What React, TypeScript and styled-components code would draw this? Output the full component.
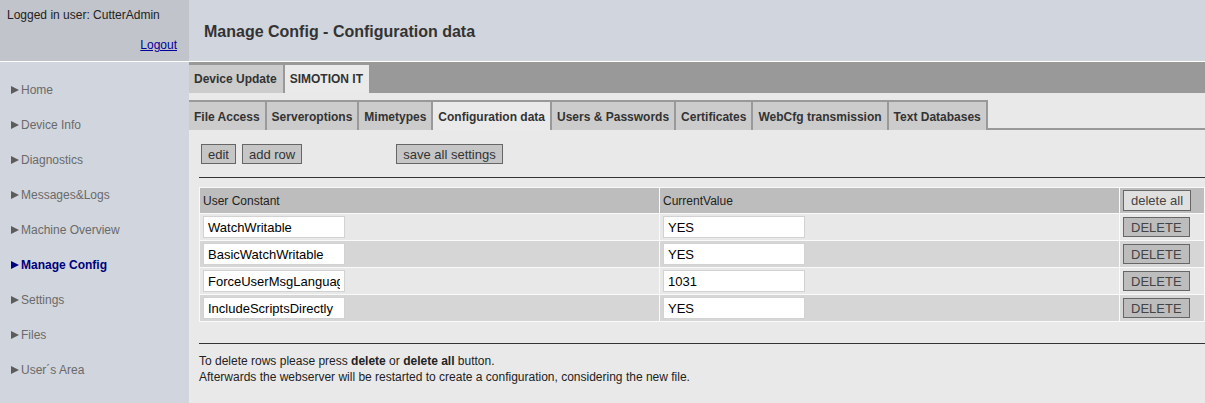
import styled, { createGlobalStyle } from "styled-components";

const GlobalStyle = createGlobalStyle`
  html, body {
    margin: 0;
    padding: 0;
  }
  body {
    font-family: "Liberation Sans", Arial, sans-serif;
    background: #e9e9e9;
  }
`;

const Page = styled.div`
  display: grid;
  grid-template-columns: 189px 1fr;
  min-height: 100vh;
`;

const Sidebar = styled.aside`
  display: flex;
  flex-direction: column;
  background: #d1d5dd;
`;

const UserBox = styled.div`
  display: flex;
  flex-direction: column;
  height: 62px;
  box-sizing: border-box;
  padding: 8px 12px 0 7px;
  background: #c1c4ca;
  border-bottom: 1px solid #fff;
`;

const UserLine = styled.div`
  font-size: 12px;
  line-height: 15px;
  color: #222;
`;

const LogoutLink = styled.a`
  align-self: flex-end;
  margin-top: 15px;
  font-size: 12px;
  line-height: 15px;
  color: #00009c;
  text-decoration: underline;
  cursor: pointer;
`;

const Nav = styled.nav`
  display: flex;
  flex-direction: column;
  padding-top: 10px;
`;

const NavItem = styled.div<{ $active?: boolean }>`
  display: flex;
  align-items: center;
  height: 35px;
  padding-left: 11px;
  font-size: 12px;
  color: ${(p) => (p.$active ? "#00007b" : "#6a6a6a")};
  font-weight: ${(p) => (p.$active ? "bold" : "normal")};
  cursor: pointer;
`;

const Arrow = styled.span<{ $active?: boolean }>`
  width: 0;
  height: 0;
  margin-right: 2px;
  border-top: 4px solid transparent;
  border-bottom: 4px solid transparent;
  border-left: 8px solid ${(p) => (p.$active ? "#00007b" : "#5c5c5c")};
`;

const Main = styled.main`
  display: flex;
  flex-direction: column;
  background: #e9e9e9;
`;

const Header = styled.header`
  display: flex;
  align-items: center;
  height: 62px;
  box-sizing: border-box;
  padding: 2px 0 0 15px;
  background: #d1d5dd;
  border-bottom: 1px solid #fff;
  font-size: 16px;
  font-weight: bold;
  color: #333;
`;

const TopTabBar = styled.div`
  display: flex;
  align-items: flex-end;
  gap: 2px;
  height: 31px;
  box-sizing: border-box;
  padding-top: 3px;
  background: #999;
`;

const TopTab = styled.div<{ $active?: boolean }>`
  padding: 1px 6px 0 5px;
  line-height: 27px;
  font-size: 12px;
  font-weight: bold;
  color: #333;
  background: ${(p) => (p.$active ? "#eaeaea" : "#cccccc")};
  cursor: pointer;
`;

const SubTabBar = styled.div`
  display: flex;
  padding-top: 7px;
`;

const SubTab = styled.div<{ $active?: boolean; $first?: boolean; $last?: boolean }>`
  padding: 2px 5px 0;
  line-height: 26px;
  font-size: 12px;
  font-weight: bold;
  color: #333;
  background: ${(p) => (p.$active ? "#eaeaea" : "#cccccc")};
  border-top: 2px solid #999;
  border-left: ${(p) => (p.$first ? "none" : "2px solid #999")};
  border-right: ${(p) => (p.$last ? "2px solid #999" : "none")};
  cursor: pointer;
`;

const TabFiller = styled.div`
  flex: 1;
  border-bottom: 2px solid #999;
`;

const Content = styled.section`
  padding: 14px 0 0 10px;
`;

const ButtonRow = styled.div`
  display: flex;
  gap: 6px;
  margin-left: 2px;
`;

const Button = styled.button<{ $push?: number }>`
  height: 20px;
  margin-left: ${(p) => p.$push ?? 0}px;
  padding: 0 6px;
  font-family: "Liberation Sans", Arial, sans-serif;
  font-size: 13px;
  color: #333;
  background: #c6c6c6;
  border: 1px solid #666;
  border-radius: 0;
  cursor: pointer;
`;

const Rule = styled.div<{ $top: number }>`
  margin-top: ${(p) => p.$top}px;
  border-top: 1px solid #333;
`;

const Table = styled.table`
  width: 100%;
  margin-top: 9px;
  table-layout: fixed;
  border-spacing: 1px;
  background: #fafafa;
`;

const Th = styled.th`
  height: 25px;
  padding: 0 3px;
  text-align: left;
  font-size: 12px;
  font-weight: normal;
  color: #222;
  background: #bdbdbd;
`;

const Td = styled.td<{ $shade?: boolean }>`
  height: 26px;
  padding: 0 3px;
  background: ${(p) => (p.$shade ? "#d6d6d6" : "#e8e8e8")};
`;

const Field = styled.input`
  display: block;
  width: 142px;
  height: 22px;
  box-sizing: border-box;
  padding: 0 4px;
  font-family: "Liberation Sans", Arial, sans-serif;
  font-size: 13px;
  color: #000;
  background: #fff;
  border: 1px solid #d2d2d2;
  outline: none;
`;

const DeleteButton = styled.button<{ $all?: boolean }>`
  display: block;
  height: ${(p) => (p.$all ? 21 : 20)}px;
  padding: 0 7px;
  font-family: "Liberation Sans", Arial, sans-serif;
  font-size: 13px;
  color: #444;
  background: ${(p) => (p.$all ? "#e0e0e0" : "#bdbdbd")};
  border: 1px solid #666;
  border-radius: 0;
  cursor: pointer;
`;

const Note = styled.p`
  margin: 9px 0 0;
  font-size: 12px;
  line-height: 16px;
  color: #222;
`;

const navItems = [
  "Home",
  "Device Info",
  "Diagnostics",
  "Messages&Logs",
  "Machine Overview",
  "Manage Config",
  "Settings",
  "Files",
  "User´s Area",
];

const subTabs = [
  "File Access",
  "Serveroptions",
  "Mimetypes",
  "Configuration data",
  "Users & Passwords",
  "Certificates",
  "WebCfg transmission",
  "Text Databases",
];

const rows = [
  { name: "WatchWritable", value: "YES" },
  { name: "BasicWatchWritable", value: "YES" },
  { name: "ForceUserMsgLanguage", value: "1031" },
  { name: "IncludeScriptsDirectly", value: "YES" },
];

export default function App() {
  return (
    <>
      <GlobalStyle />
      <Page>
        <Sidebar>
          <UserBox>
            <UserLine>Logged in user: CutterAdmin</UserLine>
            <LogoutLink>Logout</LogoutLink>
          </UserBox>
          <Nav>
            {navItems.map((item) => {
              const active = item === "Manage Config";
              return (
                <NavItem key={item} $active={active}>
                  <Arrow $active={active} />
                  {item}
                </NavItem>
              );
            })}
          </Nav>
        </Sidebar>

        <Main>
          <Header>Manage Config - Configuration data</Header>
          <TopTabBar>
            <TopTab>Device Update</TopTab>
            <TopTab $active>SIMOTION IT</TopTab>
          </TopTabBar>
          <SubTabBar>
            {subTabs.map((tab, i) => (
              <SubTab
                key={tab}
                $first={i === 0}
                $last={i === subTabs.length - 1}
                $active={tab === "Configuration data"}
              >
                {tab}
              </SubTab>
            ))}
            <TabFiller />
          </SubTabBar>

          <Content>
            <ButtonRow>
              <Button>edit</Button>
              <Button>add row</Button>
              <Button $push={88}>save all settings</Button>
            </ButtonRow>
            <Rule $top={13} />
            <Table>
              <colgroup>
                <col />
                <col />
                <col style={{ width: 84 }} />
              </colgroup>
              <thead>
                <tr>
                  <Th>User Constant</Th>
                  <Th>CurrentValue</Th>
                  <Th>
                    <DeleteButton $all>delete all</DeleteButton>
                  </Th>
                </tr>
              </thead>
              <tbody>
                {rows.map((row, i) => (
                  <tr key={row.name}>
                    <Td $shade={i % 2 === 1}>
                      <Field defaultValue={row.name} />
                    </Td>
                    <Td $shade={i % 2 === 1}>
                      <Field defaultValue={row.value} />
                    </Td>
                    <Td $shade={i % 2 === 1}>
                      <DeleteButton>DELETE</DeleteButton>
                    </Td>
                  </tr>
                ))}
              </tbody>
            </Table>
            <Rule $top={21} />
            <Note>
              To delete rows please press <b>delete</b> or <b>delete all</b> button.
              <br />
              Afterwards the webserver will be restarted to create a configuration, considering the new file.
            </Note>
          </Content>
        </Main>
      </Page>
    </>
  );
}
